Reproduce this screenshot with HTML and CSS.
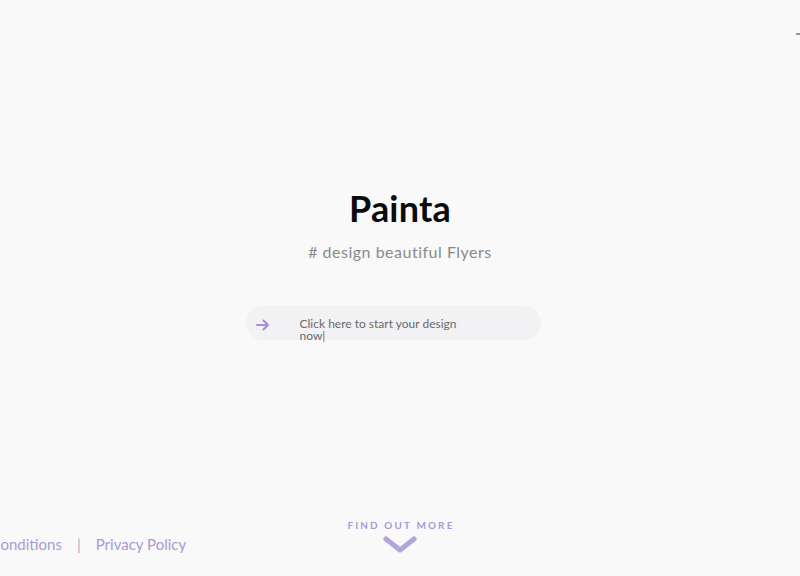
FILE: index.html
```html
<!DOCTYPE html>
<html lang="en">
<head>
<meta charset="utf-8">
<title>Painta</title>
<link rel="stylesheet" href="styles.css">
</head>
<body>
<div class="page">
  <header class="topbar">
    <span class="menu-mark"></span>
  </header>
  <main class="hero">
    <h1 class="title">Painta</h1>
    <p class="tagline"># design beautiful Flyers</p>
    <div class="start">
      <svg class="arrow" width="14" height="12" viewBox="0 0 14 12" aria-hidden="true">
        <path d="M1 6 H12 M7.5 1.5 L12 6 L7.5 10.5" fill="none" stroke="#a98ddb" stroke-width="2" stroke-linecap="round" stroke-linejoin="round"/>
      </svg>
      <span class="start-text">Click here to start your design now|</span>
    </div>
  </main>
  <footer class="footer">
    <nav class="links">
      <a class="link" href="#">Terms &amp; Conditions</a>
      <span class="sep">|</span>
      <a class="link" href="#">Privacy Policy</a>
    </nav>
    <div class="more">
      <span class="more-label">FIND OUT MORE</span>
      <svg class="chevron" width="34" height="18" viewBox="0 0 34 18" aria-hidden="true">
        <path d="M3 3 L17 14 L31 3" fill="none" stroke="#b3a2de" stroke-width="5" stroke-linecap="round" stroke-linejoin="round"/>
      </svg>
    </div>
  </footer>
</div>
</body>
</html>
```

FILE: styles.css
```css
* { box-sizing: border-box; }
html, body { margin: 0; padding: 0; }
body {
  background: #f9f9fa;
  font-family: "Lato", "Open Sans", sans-serif;
  overflow: hidden;
}
.page {
  width: 800px;
  height: 576px;
  display: flex;
  flex-direction: column;
  position: relative;
}
.topbar {
  height: 0;
  position: relative;
}
.menu-mark {
  position: absolute;
  right: 0;
  top: 33px;
  width: 4px;
  height: 2px;
  background: #9a94a8;
}
.hero {
  flex: 1;
  display: flex;
  flex-direction: column;
  align-items: center;
  padding-top: 186px;
}
.title {
  margin: 0;
  font-size: 36px;
  font-weight: 700;
  color: #0c0c0c;
  line-height: 44px;
  letter-spacing: 0.2px;
}
.tagline {
  margin: 12px 0 0;
  font-size: 16px;
  color: #8a8a8a;
  line-height: 20px;
  letter-spacing: 0.5px;
}
.start {
  margin-top: 44px;
  width: 295px;
  height: 34px;
  margin-left: -14px;
  border-radius: 17px;
  background: #f2f1f3;
  display: flex;
  align-items: center;
  padding-left: 10px;
}
.arrow { flex: none; margin-top: 4px; }
.start-text {
  margin-left: 30px;
  width: 160px;
  font-size: 12px;
  line-height: 12px;
  color: #6a6a6a;
  margin-top: 14px;
}
.footer {
  height: 62px;
  display: flex;
  position: relative;
}
.links {
  display: flex;
  align-items: center;
  gap: 15px;
  margin-left: -67px;
  padding-top: 17px;
  height: 42px;
}
.link {
  color: #a898d4;
  text-decoration: none;
  font-size: 15px;
  white-space: nowrap;
}
.sep { color: #b0a6cf; font-size: 15px; }
.more {
  position: absolute;
  left: 0;
  right: 0;
  top: 5px;
  display: flex;
  flex-direction: column;
  align-items: center;
}
.more-label {
  font-size: 10px;
  font-weight: 700;
  letter-spacing: 2.1px;
  color: #a999d4;
  padding-left: 2px;
}
.chevron { margin-top: 5px; }
```
